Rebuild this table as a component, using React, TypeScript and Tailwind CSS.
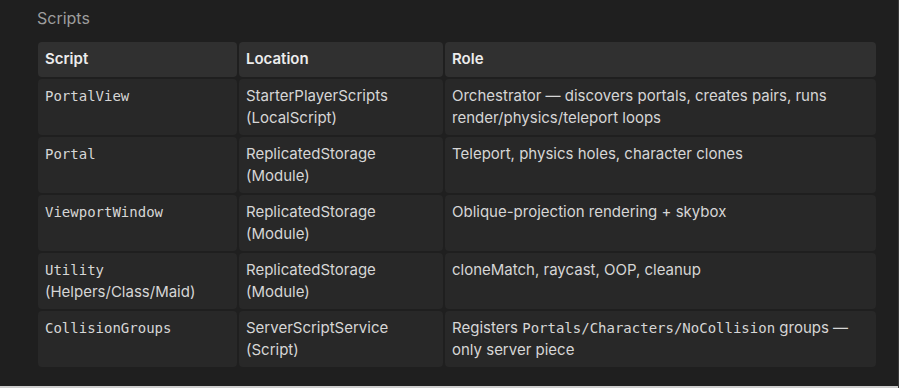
import React from 'react';

type Row = {
  script: React.ReactNode;
  location: string;
  kind: string;
  role: React.ReactNode;
};

const Code: React.FC<{ children: React.ReactNode }> = ({ children }) => (
  <code className="font-['DejaVu_Sans_Mono',monospace] text-[14px] text-[#d6d6d6]">{children}</code>
);

const rows: Row[] = [
  {
    script: <Code>PortalView</Code>,
    location: 'StarterPlayerScripts',
    kind: '(LocalScript)',
    role: 'Orchestrator — discovers portals, creates pairs, runs render/physics/teleport loops',
  },
  {
    script: <Code>Portal</Code>,
    location: 'ReplicatedStorage',
    kind: '(Module)',
    role: 'Teleport, physics holes, character clones',
  },
  {
    script: <Code>ViewportWindow</Code>,
    location: 'ReplicatedStorage',
    kind: '(Module)',
    role: 'Oblique-projection rendering + skybox',
  },
  {
    script: (
      <>
        <Code>Utility</Code> (Helpers/Class/Maid)
      </>
    ),
    location: 'ReplicatedStorage',
    kind: '(Module)',
    role: 'cloneMatch, raycast, OOP, cleanup',
  },
  {
    script: <Code>CollisionGroups</Code>,
    location: 'ServerScriptService',
    kind: '(Script)',
    role: (
      <>
        Registers <Code>Portals/Characters/NoCollision</Code> groups — only server piece
      </>
    ),
  },
];

export default function App() {
  return (
    <div className="relative w-[899px] h-[388px] overflow-hidden bg-[#1f1f1f] border-r border-[#3a3a3a] font-['Inter',sans-serif] text-[15px]">
      <div className="pl-[37px] pt-[7px]">
        <h2 className="text-[16px] leading-[22px] text-[#9d9d9d] font-normal">Scripts</h2>

        <div className="mt-[13px] grid grid-cols-[199px_204px_431px] gap-[2px] pl-[1px]">
          {['Script', 'Location', 'Role'].map((h) => (
            <div key={h} className="h-[35px] flex items-center px-[7px] rounded-[4px] bg-[#303030] font-semibold text-[#ececec]">
              {h}
            </div>
          ))}

          {rows.map((r, i) => (
            <React.Fragment key={i}>
              <div className="h-[56px] px-[7px] py-[6px] rounded-[4px] bg-[#282828] leading-[22px] text-[#d6d6d6]">
                {r.script}
              </div>
              <div className="h-[56px] px-[7px] py-[6px] rounded-[4px] bg-[#282828] leading-[22px] text-[#d6d6d6]">
                {r.location}
                <br />
                {r.kind}
              </div>
              <div className="h-[56px] px-[7px] py-[6px] rounded-[4px] bg-[#282828] leading-[22px] text-[#d6d6d6]">
                {r.role}
              </div>
            </React.Fragment>
          ))}
        </div>

        <h2 className="mt-[16px] text-[16px] leading-[22px] text-[#9d9d9d]">Workflow</h2>
      </div>
      <div className="absolute left-0 right-0 bottom-0 h-[2px] bg-[#cfcfcf]" />
    </div>
  );
}
